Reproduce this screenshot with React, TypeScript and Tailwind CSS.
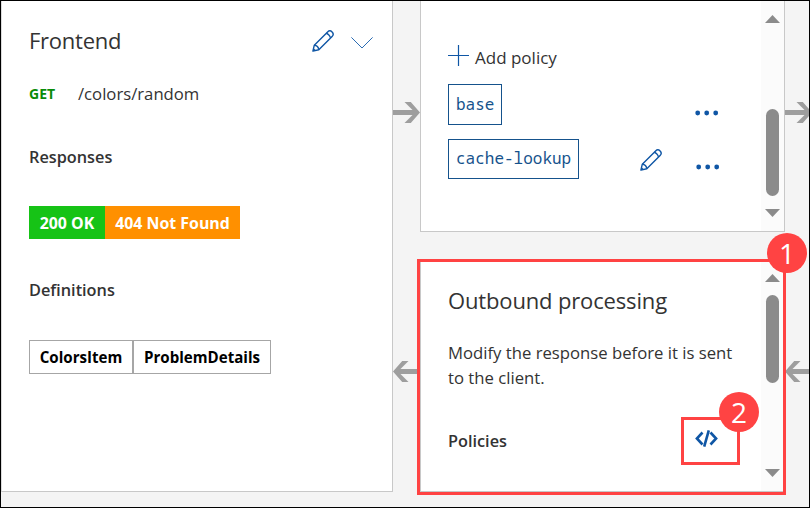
import type { ReactNode } from "react";

function Pencil({ className = "" }: { className?: string }) {
  return (
    <svg className={className} width="22" height="22" viewBox="0 0 22 22" fill="none" stroke="#0f56a5" strokeWidth="1.4" strokeLinejoin="round">
      <path d="M.9 21.1 2.3 15.2 15.6 1.9C16.9.6 18.8.6 20.1 1.9 21.4 3.2 21.4 5.1 20.1 6.4L6.8 19.7Z" />
      <path d="M14.2 3.3C15.6 3.5 17.9 5.6 18.5 7.9M2.3 15.2C4.6 15.4 6.5 17.4 6.8 19.7M1.4 18.9 3.1 20.6" />
    </svg>
  );
}

function Chevron() {
  return (
    <svg width="22" height="12" viewBox="0 0 22 12" fill="none" stroke="#2b6cb3" strokeWidth="1">
      <path d="M.4.4 11 11 21.6.4" />
    </svg>
  );
}

function Dots() {
  return (
    <svg width="24" height="6" viewBox="0 0 24 6" fill="#0f56a5">
      <circle cx="2.7" cy="3" r="2.4" />
      <circle cx="11.7" cy="3" r="2.4" />
      <circle cx="20.7" cy="3" r="2.4" />
    </svg>
  );
}

function ArrowRight() {
  return (
    <svg className="shrink-0" width="27" height="21" viewBox="0 0 27 21" fill="#9e9e9e">
      <path d="M0 8H19.5L11.5 0H17.8L27 10.5 17.8 21H11.5L19.5 13H0Z" />
    </svg>
  );
}

function ArrowLeft() {
  return (
    <svg className="shrink-0" width="27" height="21" viewBox="0 0 27 21" fill="#9e9e9e">
      <path d="M27 8H7.5L15.5 0H9.2L0 10.5 9.2 21H15.5L7.5 13H27Z" />
    </svg>
  );
}

function Connectors({ className }: { className: string }) {
  return (
    <div className={`flex flex-col items-start gap-[238px] overflow-hidden pt-[101px] ${className}`}>
      <ArrowRight />
      <ArrowLeft />
    </div>
  );
}

function Scrollbar({ className, thumb }: { className: string; thumb: string }) {
  return (
    <div className={`flex w-[23px] shrink-0 flex-col items-center bg-[#fbfbfb] ${className}`}>
      <svg className="shrink-0" width="15" height="8" viewBox="0 0 15 8" fill="#8b8b8b">
        <path d="M0 8 7.5 0 15 8Z" />
      </svg>
      <div className={`w-[13px] shrink-0 rounded-full bg-[#8b8b8b] ${thumb}`} />
      <svg className="shrink-0" width="15" height="8" viewBox="0 0 15 8" fill="#8b8b8b">
        <path d="M0 0H15L7.5 8Z" />
      </svg>
    </div>
  );
}

function Policy({ children, className }: { children: ReactNode; className: string }) {
  return (
    <div className={`flex items-center border border-[#15528c] px-[7px] pb-[2px] font-['Noto_Sans_Mono','DejaVu_Sans_Mono','Liberation_Mono',monospace] text-[16px] text-[#15528c] ${className}`}>
      {children}
    </div>
  );
}

function Badge({ children, className }: { children: ReactNode; className: string }) {
  return (
    <div className={`absolute flex size-10 items-center justify-center rounded-full bg-[#ff4343] pb-px text-[28px] leading-none text-white ${className}`}>
      {children}
    </div>
  );
}

export default function App() {
  return (
    <div className="relative flex h-[508px] w-[810px] overflow-hidden whitespace-nowrap border border-black bg-[#f4f4f4] font-['Open_Sans','Noto_Sans',sans-serif] text-[16.7px] leading-6 text-[#333]">
      <section className="flex h-[491px] w-[392px] shrink-0 flex-col border-x border-b border-[#c8c8c8] border-l-[#dcdcdc] bg-white pl-[27px] pt-[25px]">
        <header className="flex h-[30px] items-center">
          <h2 className="w-[283px] pb-[2px] text-[22px] tracking-[-0.25px]">Frontend</h2>
          <Pencil />
          <div className="ml-[17px] mt-[3px]">
            <Chevron />
          </div>
        </header>
        <div className="mt-[26px] flex h-6 items-center">
          <span className="w-[49px] text-[14px] font-bold text-[#098c09]">GET</span>
          <span>/colors/random</span>
        </div>
        <h3 className="mt-[39px] text-[16.3px] font-semibold">Responses</h3>
        <div className="mt-[37px] flex h-[33px] text-[15.9px] font-bold text-white">
          <div className="flex w-[76px] items-center justify-center bg-[#16c316]">200 OK</div>
          <div className="flex w-[135px] items-center justify-center bg-[#ff9000]">404 Not Found</div>
        </div>
        <h3 className="mt-[39px] text-[16.3px] font-semibold">Definitions</h3>
        <div className="mt-[38px] flex h-[34px] text-[15.1px] font-bold text-black">
          <div className="flex w-[104px] items-center justify-center border border-[#a6a6a6]">ColorsItem</div>
          <div className="flex w-[138px] items-center justify-center border border-[#a6a6a6]">ProblemDetails</div>
        </div>
      </section>

      <Connectors className="w-[27px] shrink-0" />

      <div className="flex w-[365px] shrink-0 flex-col gap-[29px]">
        <section className="flex h-[231px] border-x border-b border-[#c8c8c8] bg-white">
          <div className="flex grow flex-col pl-[27px] pt-11">
            <div className="flex h-6 items-start">
              <svg width="21" height="21" viewBox="0 0 21 21" stroke="#0f56a5" strokeWidth="1.2">
                <path d="M10.5 0V21M0 10.5H21" />
              </svg>
              <span className="ml-[6px] mt-px text-[17px]">Add policy</span>
            </div>
            <div className="mt-[15px] flex h-[41px] items-center">
              <Policy className="h-[41px] w-[54px]">base</Policy>
              <div className="ml-[193px] mt-4">
                <Dots />
              </div>
            </div>
            <div className="mt-[14px] flex h-10 items-center">
              <Policy className="h-10 w-[131px]">cache-lookup</Policy>
              <Pencil className="ml-[61px] mt-[2px]" />
              <div className="ml-[34px] mt-[15px]">
                <Dots />
              </div>
            </div>
          </div>
          <Scrollbar className="pt-[14px]" thumb="mb-[13px] mt-[86px] h-[87px]" />
        </section>

        <section className="flex h-[231px] border border-[#c8c8c8] bg-white">
          <div className="flex grow flex-col pl-[27px] pt-[23px]">
            <h2 className="text-[22px] leading-[30px] tracking-[-0.15px]">Outbound processing</h2>
            <p className="mt-[25px] leading-[25px]">
              Modify the response before it is sent
              <br />
              to the client.
            </p>
            <div className="mt-[39px] flex h-6 items-center">
              <h3 className="w-[247px] text-[16.3px] font-semibold">Policies</h3>
              <svg className="-mt-[5px]" width="23" height="17" viewBox="0 0 23 17" fill="none" stroke="#0f56a5" strokeWidth="2.6">
                <path d="M7.5 2.5 1.9 8.5 7.5 14.5M15.5 2.5 21.1 8.5 15.5 14.5M13.8.4 9.2 16.6" />
              </svg>
            </div>
          </div>
          <Scrollbar className="pt-[12px]" thumb="mb-[86px] mt-[13px] h-[88px]" />
        </section>
      </div>

      <Connectors className="w-[24px] shrink-0" />

      <div className="absolute left-[416px] top-[258px] h-[236px] w-[369px] border-[3px] border-[#ff4343]" />
      <div className="absolute left-[680px] top-[416px] h-[48px] w-[59px] border-[3px] border-[#ff4343]" />
      <Badge className="left-[766px] top-[232px]">1</Badge>
      <Badge className="left-[718px] top-[391px]">2</Badge>
    </div>
  );
}
